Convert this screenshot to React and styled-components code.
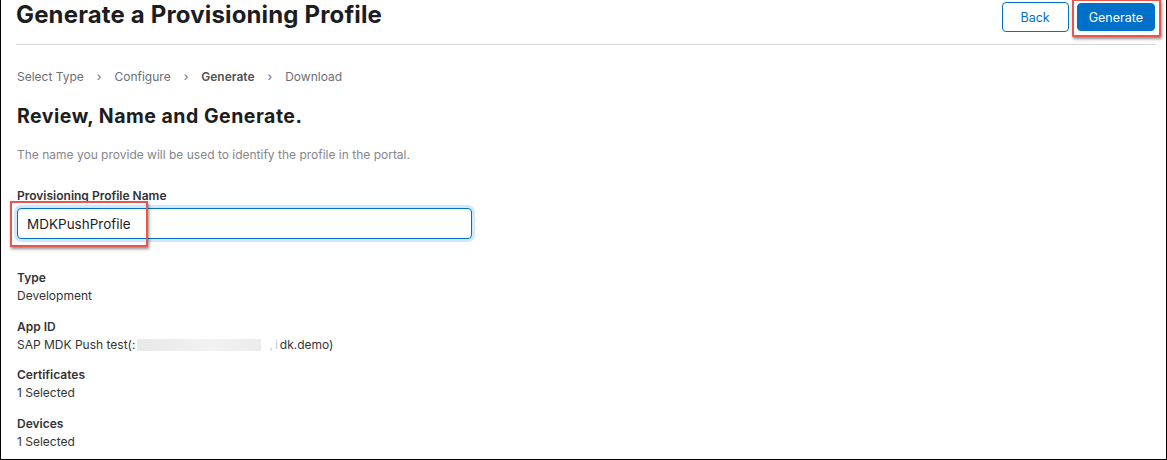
import React from 'react'
import styled, { createGlobalStyle } from 'styled-components'

const GlobalStyle = createGlobalStyle`
  html, body {
    margin: 0;
    padding: 0;
    background: #fff;
  }
  body {
    font-family: Inter, "Liberation Sans", Arial, sans-serif;
    color: #1d1d1f;
  }
`

const Frame = styled.div`
  box-sizing: border-box;
  width: 1167px;
  height: 460px;
  border: 1px solid #000;
  border-top: none;
  overflow: hidden;
  padding: 0 5px 0 15px;
`

const Header = styled.div`
  display: flex;
  align-items: flex-start;
  justify-content: space-between;
  height: 44px;
  margin-right: 5px;
  border-bottom: 1px solid #d6d6d6;
`

const Title = styled.h1`
  margin: 0;
  font-size: 24px;
  font-weight: 700;
  line-height: 30px;
  letter-spacing: 0.15px;
  color: #1d1d1f;
`

const Actions = styled.div`
  display: flex;
  align-items: flex-start;
  gap: 3px;
  margin-right: -5px;
`

const Button = styled.button`
  box-sizing: border-box;
  height: ${({ primary }) => (primary ? '28px' : '30px')};
  margin-top: ${({ primary }) => (primary ? '0' : '2px')};
  padding: 0 ${({ primary }) => (primary ? '11px' : '18px')};
  border-radius: 4px;
  border: 1px solid #0070c9;
  background: ${({ primary }) => (primary ? '#0070c9' : '#fff')};
  color: ${({ primary }) => (primary ? '#fff' : '#0070c9')};
  font-family: inherit;
  font-size: 12.5px;
  cursor: pointer;
`

const Highlight = styled.span`
  display: inline-flex;
  margin-top: -1px;
  padding: 2px 4px 4px 3px;
  border: 2px solid #e8574e;
  box-shadow: 1px 2px 3px rgba(0, 0, 0, 0.45);
  border-radius: 1px;
`

const Crumbs = styled.nav`
  display: flex;
  align-items: center;
  gap: 13px;
  margin-top: 24px;
  font-size: 12px;
  color: #6e6e73;
  padding-left: 1px;
`

const Crumb = styled.span`
  font-weight: ${({ current }) => (current ? 600 : 400)};
  color: ${({ current }) => (current ? '#515154' : '#6e6e73')};
`

const Chevron = styled.span`
  font-size: 12px;
  color: #6e6e73;
`

const Heading = styled.h2`
  margin: 19px 0 0 1px;
  font-size: 19.5px;
  font-weight: 700;
  letter-spacing: 0.5px;
  line-height: 26px;
`

const Intro = styled.p`
  margin: 18px 0 0 1px;
  font-size: 12px;
  color: #86868b;
`

const Field = styled.div`
  margin-top: 26px;
  display: flex;
  flex-direction: column;
`

const Label = styled.div`
  font-size: 12px;
  font-weight: 600;
  color: #333336;
  line-height: 16px;
  padding-left: 1px;
`

const InputRow = styled.div`
  position: relative;
  margin-top: 4px;
  width: 455px;
`

const Input = styled.input`
  box-sizing: border-box;
  width: 455px;
  height: 31px;
  margin-left: 1px;
  padding: 0 9px;
  border: 1px solid #0070c9;
  border-radius: 4px;
  box-shadow: 0 0 0 3px rgba(0, 125, 250, 0.18);
  font-family: inherit;
  font-size: 13.5px;
  color: #1d1d1f;
  outline: none;
`

const InputMark = styled.span`
  position: absolute;
  left: -6px;
  top: -7px;
  width: 134px;
  height: 42px;
  border: 2px solid #e8574e;
  box-shadow: 1px 2px 3px rgba(0, 0, 0, 0.45);
  pointer-events: none;
`

const Details = styled.dl`
  margin: 31px 0 0 1px;
  display: flex;
  flex-direction: column;
  gap: 14.7px;
`

const Item = styled.div`
  display: flex;
  flex-direction: column;
  gap: 2px;
`

const Term = styled.dt`
  font-size: 12px;
  font-weight: 600;
  color: #333336;
  line-height: 16px;
`

const Value = styled.dd`
  margin: 0;
  font-size: 12px;
  color: #333336;
  line-height: 16px;
  display: flex;
  align-items: center;
`

const Blur = styled.span`
  display: inline-block;
  width: 124px;
  height: 12px;
  margin: 0 8px 0 2px;
  background: linear-gradient(90deg, #e9e9e9, #f2f2f2 60%, #ececec);
`

const Faint = styled.span`
  color: #c8c8c8;
  margin-right: 2px;
`

const details = [
  { term: 'Type', value: 'Development' },
  { term: 'App ID', value: 'appid' },
  { term: 'Certificates', value: '1 Selected' },
  { term: 'Devices', value: '1 Selected' }
]

export default function App() {
  return (
    <>
      <GlobalStyle />
      <Frame>
        <Header>
          <Title>Generate a Provisioning Profile</Title>
          <Actions>
            <Button>Back</Button>
            <Highlight>
              <Button primary>Generate</Button>
            </Highlight>
          </Actions>
        </Header>
        <Crumbs>
          <Crumb>Select Type</Crumb>
          <Chevron>›</Chevron>
          <Crumb>Configure</Crumb>
          <Chevron>›</Chevron>
          <Crumb current>Generate</Crumb>
          <Chevron>›</Chevron>
          <Crumb>Download</Crumb>
        </Crumbs>
        <Heading>Review, Name and Generate.</Heading>
        <Intro>The name you provide will be used to identify the profile in the portal.</Intro>
        <Field>
          <Label>Provisioning Profile Name</Label>
          <InputRow>
            <Input defaultValue="MDKPushProfile" />
            <InputMark />
          </InputRow>
        </Field>
        <Details>
          {details.map(d => (
            <Item key={d.term}>
              <Term>{d.term}</Term>
              <Value>
                {d.value === 'appid' ? (
                  <>
                    SAP MDK Push test(:<Blur />
                    <Faint>,</Faint>
                    <Faint>i</Faint>dk.demo)
                  </>
                ) : (
                  d.value
                )}
              </Value>
            </Item>
          ))}
        </Details>
      </Frame>
    </>
  )
}
